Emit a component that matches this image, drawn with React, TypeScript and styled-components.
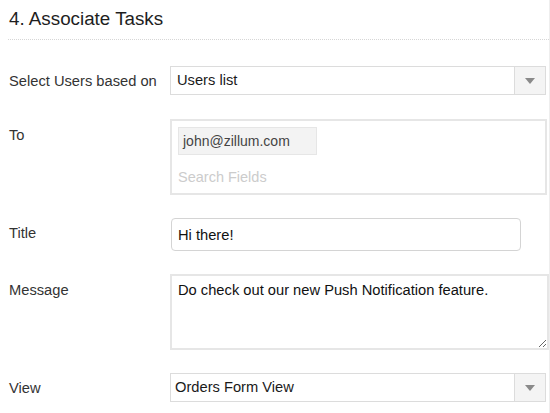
import styled, { createGlobalStyle } from "styled-components";

const GlobalStyle = createGlobalStyle`
  html, body {
    margin: 0;
    padding: 0;
    background: #fff;
  }
  body {
    font-family: "Liberation Sans", Arial, Helvetica, sans-serif;
    color: #222;
  }
`;

const Page = styled.div`
  box-sizing: border-box;
  width: 550px;
  height: 413px;
  padding: 8px 0 0 8px;
  border-right: 1px solid #eeeeee;
  overflow: hidden;
`;

const Heading = styled.h2`
  margin: 0;
  padding: 0 0 9px 1px;
  font-size: 18.8px;
  line-height: 22px;
  font-weight: normal;
  color: #1e1e1e;
  border-bottom: 1px dotted #d6d6d6;
`;

const Form = styled.div`
  display: flex;
  flex-direction: column;
  gap: 23px;
  margin-top: 26px;
`;

const Row = styled.div`
  display: flex;
  align-items: flex-start;
`;

const Label = styled.div<{ $lh?: number }>`
  box-sizing: border-box;
  width: 162px;
  flex-shrink: 0;
  padding-left: 1px;
  font-size: 14.7px;
  line-height: ${(p) => p.$lh ?? 30}px;
  color: #333;
`;

const SelectBox = styled.div`
  box-sizing: border-box;
  display: flex;
  width: 376px;
  height: 29px;
  border: 1px solid #dcdcdc;
  background: #fff;
`;

const SelectValue = styled.div<{ $pad?: number }>`
  flex: 1;
  padding-left: ${(p) => p.$pad ?? 6}px;
  font-size: 14.7px;
  line-height: 27px;
  color: #1a1a1a;
`;

const ArrowBox = styled.div`
  width: 30px;
  display: flex;
  align-items: center;
  justify-content: center;
  background: #f4f4f4;
  border-left: 1px solid #dcdcdc;
`;

const Arrow = styled.span`
  width: 0;
  height: 0;
  border-left: 5px solid transparent;
  border-right: 5px solid transparent;
  border-top: 6px solid #8a8a8a;
`;

const RecipientBox = styled.div`
  box-sizing: border-box;
  width: 377px;
  height: 76px;
  padding: 6px;
  border: 2px solid #e6e6e6;
`;

const Chip = styled.div`
  box-sizing: border-box;
  width: 139px;
  height: 28px;
  padding-left: 4px;
  font-size: 14px;
  line-height: 26px;
  color: #444;
  background: #f3f3f3;
  border: 1px solid #e6e6e6;
`;

const SearchHint = styled.div`
  margin-top: 13px;
  font-size: 14.5px;
  line-height: 18px;
  color: #cccccc;
`;

const TextInput = styled.input`
  box-sizing: border-box;
  width: 350px;
  height: 33px;
  margin: 0 0 0 1px;
  padding: 0 6px;
  font-family: inherit;
  font-size: 14.7px;
  color: #111;
  border: 1px solid #d4d4d4;
  border-radius: 4px;
  outline: none;
  background: #fff;
`;

const MessageArea = styled.textarea`
  box-sizing: border-box;
  width: 380px;
  height: 76px;
  margin: 0;
  padding: 5px 6px;
  font-family: inherit;
  font-size: 14.7px;
  line-height: 18px;
  color: #111;
  border: 2px solid #e6e6e6;
  outline: none;
  resize: vertical;
  background: #fff;
`;

const Select = ({ value, pad }: { value: string; pad?: number }) => (
  <SelectBox>
    <SelectValue $pad={pad}>{value}</SelectValue>
    <ArrowBox>
      <Arrow />
    </ArrowBox>
  </SelectBox>
);

export default function App() {
  return (
    <>
      <GlobalStyle />
      <Page>
        <Heading>4. Associate Tasks</Heading>
        <Form>
          <Row>
            <Label>Select Users based on</Label>
            <Select value="Users list" />
          </Row>
          <Row>
            <Label $lh={32}>To</Label>
            <RecipientBox>
              <Chip>john@zillum.com</Chip>
              <SearchHint>Search Fields</SearchHint>
            </RecipientBox>
          </Row>
          <Row>
            <Label>Title</Label>
            <TextInput readOnly defaultValue="Hi there!" />
          </Row>
          <Row>
            <Label $lh={32}>Message</Label>
            <MessageArea
              readOnly
              defaultValue="Do check out our new Push Notification feature."
            />
          </Row>
          <Row>
            <Label>View</Label>
            <Select value="Orders Form View" pad={4} />
          </Row>
        </Form>
      </Page>
    </>
  );
}
